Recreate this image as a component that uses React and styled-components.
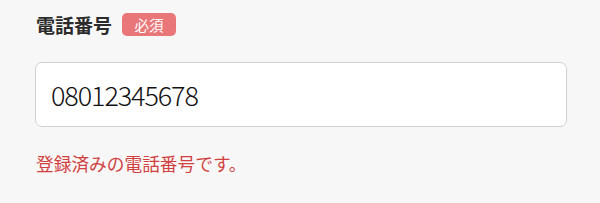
import React, { useState } from 'react';
import styled, { createGlobalStyle } from 'styled-components';

const GlobalStyle = createGlobalStyle`
  html, body {
    margin: 0;
    padding: 0;
    background-color: #f7f7f7;
    font-family: "Noto Sans CJK JP", "Noto Sans", sans-serif;
  }
`;

const Container = styled.div`
  width: 597px;
  height: 203px;
  box-sizing: border-box;
  padding: 12px 34px 0 35px;
  background-color: #f7f7f7;
`;

const LabelRow = styled.div`
  display: flex;
  align-items: center;
  gap: 10px;
  height: 24px;
`;

const Label = styled.label`
  font-size: 19px;
  font-weight: 700;
  color: #2b2b2b;
  padding-left: 1px;
`;

const Badge = styled.span`
  display: inline-flex;
  align-items: center;
  justify-content: center;
  width: 54px;
  height: 23px;
  border-radius: 5px;
  background-color: #e9777a;
  color: #fff;
  font-size: 14.5px;
`;

const Input = styled.input`
  display: block;
  box-sizing: border-box;
  width: 532px;
  height: 65px;
  margin-top: 26px;
  padding: 0 14px 0 15px;
  border: 1px solid #cfcfcf;
  border-radius: 7px;
  background-color: #fff;
  font-family: "Noto Sans CJK JP", "Noto Sans", sans-serif;
  font-size: 27px;
  font-weight: 300;
  letter-spacing: -1.1px;
  color: #111;
  outline: none;
`;

const ErrorText = styled.p`
  margin: 23px 0 0 1px;
  font-size: 17.7px;
  color: #d23f3f;
`;

const App = () => {
  const [phone, setPhone] = useState('08012345678');

  return (
    <Container>
      <GlobalStyle />
      <LabelRow>
        <Label htmlFor="phone">電話番号</Label>
        <Badge>必須</Badge>
      </LabelRow>
      <Input id="phone" value={phone} onChange={e => setPhone(e.target.value)} />
      <ErrorText>登録済みの電話番号です。</ErrorText>
    </Container>
  );
};

export default App;
